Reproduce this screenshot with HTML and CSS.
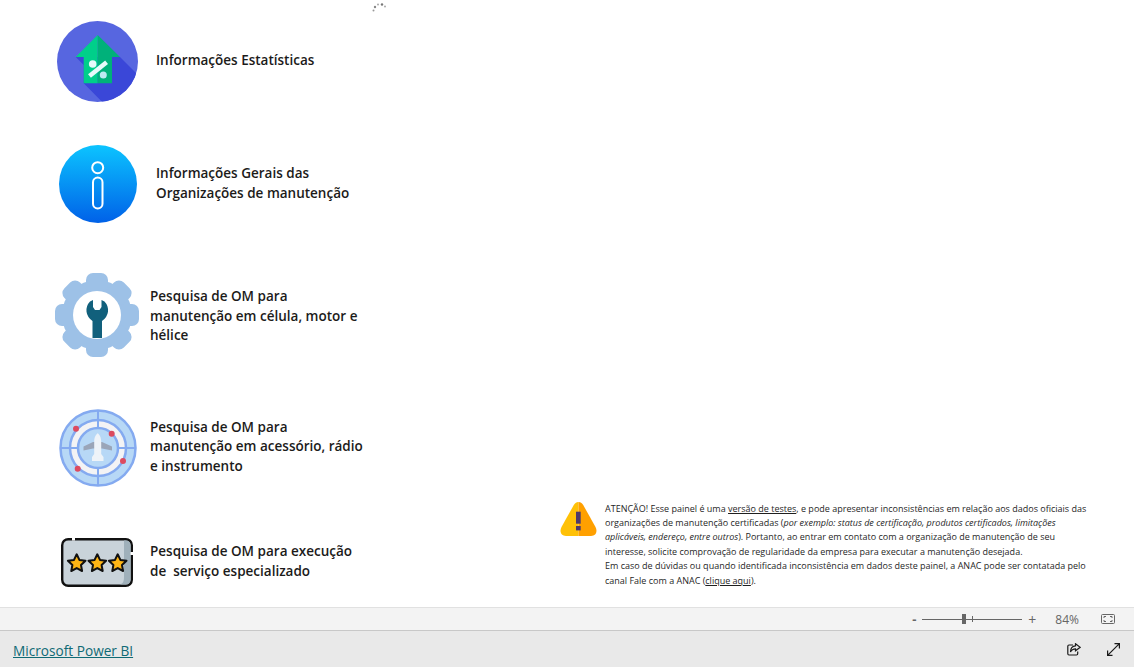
FILE: index.html
```html
<!DOCTYPE html>
<html lang="pt-BR">
<head>
<meta charset="UTF-8">
<title>Painel ANAC - Organizações de manutenção</title>
<link rel="stylesheet" href="styles.css">
</head>
<body>

<main class="report">
    <svg class="spinner" viewBox="0 0 14 9" width="14" height="9">
        <circle cx="1.5" cy="7.5" r="1" fill="#999"/>
        <circle cx="3" cy="4" r="1.2" fill="#888"/>
        <circle cx="6" cy="1.5" r="1" fill="#aaa"/>
        <circle cx="10" cy="1.5" r="1.2" fill="#777"/>
        <circle cx="13" cy="3.5" r="1" fill="#aaa"/>
    </svg>

    <nav class="menu">
        <a class="row row-stats">
            <svg class="icon" viewBox="0 0 81 81" width="81" height="81">
                <defs><clipPath id="disc"><circle cx="40.5" cy="40.5" r="40.5"/></clipPath></defs>
                <circle cx="40.5" cy="40.5" r="40.5" fill="#5766e0"/>
                <polygon clip-path="url(#disc)" points="63,36 100,73 100,100 64,100 26.7,62.3 26.7,44 18.7,36" fill="#3a47d8"/>
                <polygon points="40.7,14 18.7,36 26.7,36 26.7,62.3 40.7,62.3" fill="#00cf8a"/>
                <polygon points="40.7,14 63,36 55,36 55,62.3 40.7,62.3" fill="#00b17a"/>
                <line x1="32.5" y1="55" x2="49.6" y2="41.3" stroke="#e6fafa" stroke-width="4.5"/>
                <circle cx="35.7" cy="43" r="3.8" fill="#e6fafa"/>
                <circle cx="46.3" cy="54" r="3.5" fill="#bdeaf2"/>
            </svg>
            <span>Informações Estatísticas</span>
        </a>

        <a class="row row-info">
            <svg class="icon" viewBox="0 0 78 78" width="78" height="78">
                <defs><linearGradient id="blue" x1="0" y1="0" x2="0" y2="1">
                    <stop offset="0" stop-color="#0cc4ff"/><stop offset="1" stop-color="#0061e8"/>
                </linearGradient></defs>
                <circle cx="39" cy="39" r="39" fill="url(#blue)"/>
                <circle cx="38.7" cy="22.7" r="5.5" fill="none" stroke="#fff" stroke-width="2"/>
                <rect x="34" y="32.5" width="9.5" height="31" rx="4.75" fill="none" stroke="#fff" stroke-width="2"/>
            </svg>
            <span>Informações Gerais das<br>Organizações de manutenção</span>
        </a>

        <a class="row row-gear">
            <svg class="icon" viewBox="0 0 84 84" width="84" height="84">
                <g fill="#9dc1e7">
                    <circle cx="42" cy="42" r="35"/>
                    <rect x="31" y="0" width="22" height="20" rx="7"/>
                    <rect x="31" y="0" width="22" height="20" rx="7" transform="rotate(45 42 42)"/>
                    <rect x="31" y="0" width="22" height="20" rx="7" transform="rotate(90 42 42)"/>
                    <rect x="31" y="0" width="22" height="20" rx="7" transform="rotate(135 42 42)"/>
                    <rect x="31" y="0" width="22" height="20" rx="7" transform="rotate(180 42 42)"/>
                    <rect x="31" y="0" width="22" height="20" rx="7" transform="rotate(225 42 42)"/>
                    <rect x="31" y="0" width="22" height="20" rx="7" transform="rotate(270 42 42)"/>
                    <rect x="31" y="0" width="22" height="20" rx="7" transform="rotate(315 42 42)"/>
                </g>
                <circle cx="42" cy="42" r="24" fill="#fff"/>
                <path d="M35 28.500L38 27V34L40 37H44.500L46.500 34V27L49.500 28.500A12.500 12.500 0 0 1 47 48V65H37.500V48A12.500 12.500 0 0 1 35 28.500Z" fill="#11607c"/>
            </svg>
            <span>Pesquisa de OM para<br>manutenção em célula, motor e<br>hélice</span>
        </a>

        <a class="row row-radar">
            <svg class="icon" viewBox="0 0 78 78" width="78" height="78">
                <circle cx="39" cy="39" r="37.5" fill="#b7d8f6" stroke="#84aaf0" stroke-width="2.5"/>
                <circle cx="39" cy="39" r="28" fill="#f3f3f5" stroke="#84aaf0" stroke-width="2.5"/>
                <path d="M39 1V77M1 39H77" stroke="#84aaf0" stroke-width="2"/>
                <circle cx="39" cy="39" r="20" fill="#b7d8f6" stroke="#84aaf0" stroke-width="2.5"/>
                <polygon points="24.500,37.500 34,33 43,33 53,37.500 53,41.500 43,39.500 34,39.500 24.500,41.500" fill="#9aa5b8"/>
                <path d="M35.200 33C35.200 28 37 25.500 38.700 24.300C40.400 25.500 42.200 28 42.200 33V45L44.500 48V52H33V48L35.200 45Z" fill="#eef3f8"/>
                <circle cx="17" cy="19.7" r="3" fill="#dc4a5f"/>
                <circle cx="52.7" cy="24.7" r="3" fill="#dc4a5f"/>
                <circle cx="64" cy="52" r="3" fill="#dc4a5f"/>
                <circle cx="18.7" cy="59.7" r="3" fill="#dc4a5f"/>
            </svg>
            <span>Pesquisa de OM para<br>manutenção em acessório, rádio<br>e instrumento</span>
        </a>

        <a class="row row-stars">
            <svg class="icon" viewBox="0 0 72 49" width="72" height="49">
                <rect x="1.2" y="1.2" width="69.6" height="46.6" rx="6" fill="#c9d3da" stroke="#111" stroke-width="2.4"/>
                <path d="M63 2.4H64.500A5 5 0 0 1 69.600 7.500V41.500A5 5 0 0 1 64.500 46.600H58C63 46 63 42 63 38Z" fill="#9fb0ba"/>
                <rect x="11" y="0" width="3" height="2.500" fill="#fff"/>
                <rect x="69.500" y="14" width="2.500" height="3" fill="#fff"/>
                <g fill="#fdb515" stroke="#111" stroke-width="2" stroke-linejoin="round">
                    <polygon points="15.700,16.300 18.400,21.900 24.500,22.700 20,27 21.100,33 15.700,30.100 10.300,33 11.400,27 6.900,22.700 13,21.900"/>
                    <polygon points="36.300,16.300 39,21.900 45.100,22.700 40.600,27 41.700,33 36.300,30.100 30.900,33 32,27 27.500,22.700 33.600,21.900"/>
                    <polygon points="56.700,16.300 59.400,21.900 65.500,22.700 61,27 62.100,33 56.700,30.100 51.300,33 52.400,27 47.900,22.700 54,21.900"/>
                </g>
            </svg>
            <span>Pesquisa de OM para execução<br>de&nbsp; serviço especializado</span>
        </a>
    </nav>

    <aside class="notice">
        <svg class="warn" viewBox="0 0 37 34" width="37" height="34">
            <path d="M18.500 0C16 0 14.800 1.500 13.500 3.500L1.500 25C-.8 29.500 1 34 6 34H18.500Z" fill="#ffc107"/>
            <path d="M18.500 0C21 0 22.200 1.500 23.500 3.500L35.500 25C37.800 29.500 36 34 31 34H18.500Z" fill="#ffa000"/>
            <rect x="16" y="9.700" width="4.700" height="12" fill="#4d3a6b"/>
            <rect x="16" y="24" width="4.700" height="4.400" fill="#4d3a6b"/>
        </svg>
        <p>ATENÇÃO! Esse painel é uma <u>versão de testes</u>, e pode apresentar inconsistências em relação aos dados oficiais das<br>
        organizações de manutenção certificadas (<em>por exemplo: status de certificação, produtos certificados, limitações<br>
        aplicáveis, endereço, entre outros</em>). Portanto, ao entrar em contato com a organização de manutenção de seu<br>
        interesse, solicite comprovação de regularidade da empresa para executar a manutenção desejada.<br>
        Em caso de dúvidas ou quando identificada inconsistência em dados deste painel, a ANAC pode ser contatada pelo<br>
        canal Fale com a ANAC (<u>clique aqui</u>).</p>
    </aside>
</main>

<div class="statusbar">
    <span class="zoom-sign">-</span>
    <div class="slider"><i class="thumb"></i><i class="tick"></i></div>
    <span class="zoom-sign plus">+</span>
    <span class="percent">84%</span>
    <svg class="fit" viewBox="0 0 14 10" width="14" height="10" fill="none" stroke="#666">
        <rect x=".5" y=".5" width="13" height="9" rx="1"/>
        <path d="M3 4V2.500H5M9 2.500H11V4M11 6V7.500H9M5 7.500H3V6"/>
    </svg>
</div>

<footer class="footer">
    <a class="brand" href="#">Microsoft Power BI</a>
    <svg class="share" viewBox="0 0 14 13" width="14" height="13" fill="none" stroke="#1a1a1a" stroke-width="1.200">
        <path d="M6 2H2A1.200 1.200 0 0 0 .8 3.200V10.800A1.200 1.200 0 0 0 2 12H9.500A1.200 1.200 0 0 0 10.700 10.800V8.500"/>
        <path d="M8.500 .8L13.200 4.300L8.500 7.800V5.800C6 5.800 4.500 6.800 3.500 9C3.500 5.500 5.500 3 8.500 2.800Z"/>
    </svg>
    <svg class="expand" viewBox="0 0 13 13" width="13" height="13" fill="none" stroke="#1a1a1a" stroke-width="1.200">
        <path d="M7.500 .6H12.400V5.500M12.400 .6L.6 12.400M.6 7.500V12.400H5.500"/>
    </svg>
</footer>

</body>
</html>
```

FILE: styles.css
```css
* {
    box-sizing: border-box;
}
html, body {
    height: 100%;
}
body {
    margin: 0;
    display: flex;
    flex-direction: column;
    height: 667px;
    overflow: hidden;
    font-family: "Open Sans", "Noto Sans", sans-serif;
    background-color: #fff;
    color: #1c1b1a;
}

.report {
    position: relative;
    height: 607px;
    display: flex;
    justify-content: space-between;
    overflow: hidden;
}
.spinner {
    position: absolute;
    left: 372px;
    top: 3px;
}

.menu {
    display: flex;
    flex-direction: column;
    width: 400px;
}
.row {
    display: flex;
    align-items: center;
    font-size: 13.5px;
    font-weight: 600;
    line-height: 20px;
}
.icon {
    flex: none;
}
.row-stats {
    margin-top: 21px;
    padding-left: 57px;
}
.row-stats span {
    margin-left: 18px;
    padding-bottom: 4px;
}
.row-info {
    margin-top: 43px;
    padding-left: 59px;
}
.row-info span {
    margin-left: 19px;
    padding-bottom: 2px;
}
.row-gear {
    margin-top: 50px;
    padding-left: 55px;
}
.row-gear span {
    margin-left: 11px;
    padding-top: 3px;
    line-height: 19.6px;
}
.row-radar {
    margin-top: 52px;
    padding-left: 59px;
}
.row-radar span {
    margin-left: 13px;
    padding-bottom: 2px;
    line-height: 19.6px;
}
.row-stars {
    margin-top: 51px;
    padding-left: 61px;
}
.row-stars span {
    margin-left: 17px;
    padding-bottom: 4px;
}

.notice {
    display: flex;
    align-items: flex-start;
    align-self: flex-end;
    width: 574px;
    margin-bottom: 19px;
    color: #1f1f1f;
}
.warn {
    flex: none;
}
.notice p {
    margin: 0 0 0 8px;
    font-size: 9px;
    line-height: 14.4px;
    white-space: nowrap;
}

.statusbar {
    height: 24px;
    display: flex;
    align-items: center;
    justify-content: flex-end;
    padding-right: 19px;
    background-color: #f3f3f3;
    border-top: 1px solid #e1e1e1;
    border-bottom: 1px solid #c8c8c8;
    color: #666;
}
.zoom-sign {
    font-size: 13px;
    font-weight: 700;
}
.plus {
    font-weight: 400;
    font-size: 14px;
}
.slider {
    position: relative;
    width: 100px;
    height: 1px;
    margin: 0 6px;
    background-color: #666;
}
.thumb {
    position: absolute;
    left: 40px;
    top: -5px;
    width: 4px;
    height: 10px;
    background-color: #666;
}
.tick {
    position: absolute;
    left: 50px;
    top: -3px;
    width: 1px;
    height: 6px;
    background-color: #666;
}
.percent {
    margin-left: 19px;
    font-size: 12px;
}
.fit {
    margin-left: 22px;
}

.footer {
    flex: 1;
    display: flex;
    align-items: center;
    padding: 0 14px 0 13px;
    background-color: #e9e9e9;
}
.brand {
    margin-right: auto;
    padding-top: 2px;
    font-size: 13.65px;
    color: #0f6a75;
}
.expand {
    margin-left: 26px;
}
```
